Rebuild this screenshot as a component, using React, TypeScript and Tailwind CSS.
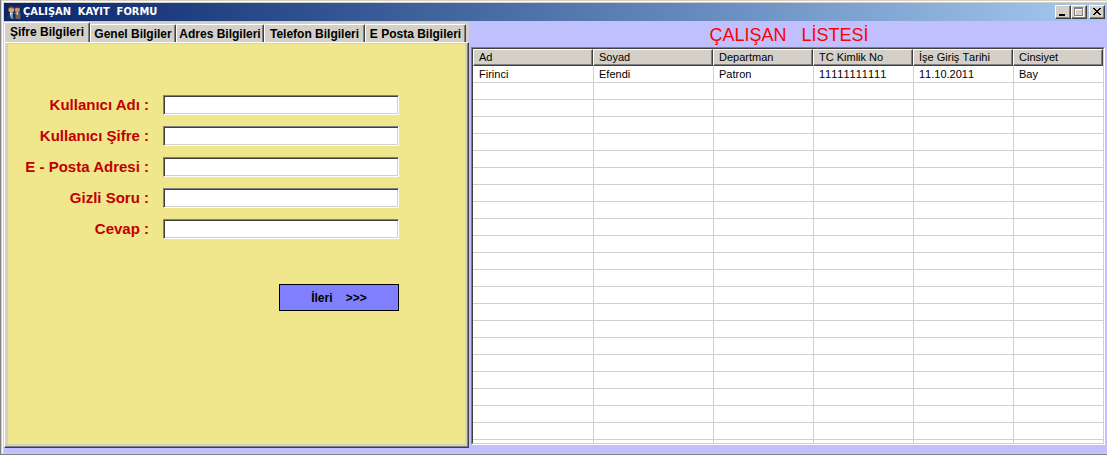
import { useState } from "react";

const tabs = ["Şifre Bilgileri", "Genel Bilgiler", "Adres Bilgileri", "Telefon Bilgileri", "E Posta Bilgileri"];
const tabWidths = ["w-[86px]", "w-[86px]", "w-[88px]", "w-[101px]", "w-[101px]"];

const fields = [
  { id: "user", label: "Kullanıcı Adı :", type: "text" },
  { id: "password", label: "Kullanıcı Şifre :", type: "password" },
  { id: "email", label: "E - Posta Adresi :", type: "text" },
  { id: "question", label: "Gizli Soru :", type: "text" },
  { id: "answer", label: "Cevap :", type: "text" },
];

const columns = ["Ad", "Soyad", "Departman", "TC Kimlik No", "İşe Giriş Tarihi", "Cinsiyet"];
const employees = [["Firinci", "Efendi", "Patron", "11111111111", "11.10.2011", "Bay"]];
const emptyRows = Array.from({ length: 21 }, (_, i) => i);

function AppIcon() {
  return (
    <svg viewBox="1 0 13 13" className="h-[14px] w-[14px]" aria-hidden="true">
      <path d="M7.5 7.5 9 6h3l1.5 2v5h-6z" fill="#6d6058" />
      <circle cx="10.6" cy="4.2" r="2.4" fill="#c98f6c" />
      <path d="M8 4.2c0-4 5.2-4 5.2 0l-1-1.4H9z" fill="#5a3422" />
      <path d="M9.5 7h2l-1 3z" fill="#e3ddd6" />
      <path d="M1 13V9l2-2h4l2 2v4z" fill="#26303c" />
      <path d="M3.6 7h3l-.6 5H4.6z" fill="#ffffff" />
      <path d="M5 8h1.3l.7 5H5z" fill="#3a8ad6" />
      <circle cx="5" cy="4.4" r="2.6" fill="#dda37c" />
      <path d="M2 4.5c0-4.8 6-4.8 6 0L7 3H3z" fill="#7a431f" />
    </svg>
  );
}

const captionButton =
  "flex h-[14px] w-4 items-center justify-center border border-t-white border-l-white border-r-[#404040] border-b-[#404040] bg-[#d4d0c8] shadow-[inset_-1px_-1px_#808080]";

function TitleBar() {
  return (
    <header className="flex h-[18px] items-center bg-linear-to-r from-[#0a246a] to-[#a6caf0] pr-[2px] pl-[3px]">
      <AppIcon />
      <h1 className="ml-[2px] flex-1 font-['DejaVu_Sans_Condensed',sans-serif] text-[11px] leading-[18px] font-bold whitespace-pre text-white">
        ÇALIŞAN  KAYIT  FORMU
      </h1>
      <button aria-label="Simge durumuna küçült" className={captionButton}>
        <svg viewBox="0 0 12 10" className="h-[10px] w-[12px]" shapeRendering="crispEdges"><path d="M2 7h6v2H2z" /></svg>
      </button>
      <button aria-label="Ekranı kapla" disabled className={captionButton}>
        <svg viewBox="0 0 12 10" className="h-[10px] w-[12px]" shapeRendering="crispEdges">
          <path d="M2 1h9v9H2zM3 3v6h7V3z" fill="#fff" fillRule="evenodd" />
          <path d="M1 0h9v9H1zM2 2v6h7V2z" fill="#808080" fillRule="evenodd" />
        </svg>
      </button>
      <button aria-label="Kapat" className={`ml-[2px] ${captionButton}`}>
        <svg viewBox="0 0 12 10" className="h-[10px] w-[12px]" shapeRendering="crispEdges">
          <path d="M2 1h2v1h1v1h2v-1h1v-1h2v1h-1v1h-1v1h-1v1h1v1h1v1h1v1h-2v-1h-1v-1h-2v1h-1v1h-2v-1h1v-1h1v-1h1v-1h-1v-1h-1v-1h-1z" />
        </svg>
      </button>
    </header>
  );
}

function LoginPanel() {
  const [active, setActive] = useState(0);
  return (
    <section className="flex w-[465px] shrink-0 flex-col bg-[#d4d0c8]">
      <div role="tablist" className="flex h-[20px] items-end">
        {tabs.map((tab, i) => (
          <button
            key={tab}
            role="tab"
            aria-selected={i === active}
            onClick={() => setActive(i)}
            className={`${tabWidths[i]} ${
              i === active ? "h-[20px] pb-[2px]" : "h-[18px]"
            } shrink-0 rounded-t-[2px] border-t border-r border-l border-t-white border-r-[#404040] border-l-white text-center text-[12px] leading-[16px] font-bold whitespace-nowrap shadow-[inset_-1px_0_#808080]`}
          >
            {tab}
          </button>
        ))}
      </div>
      <div
        role="tabpanel"
        className="flex flex-1 flex-col border border-t-white border-r-[#404040] border-b-[#404040] border-l-white bg-[#808080] pr-px pb-px"
      >
        <form
          onSubmit={(e) => e.preventDefault()}
          className="flex flex-1 flex-col border-t border-r-2 border-b-2 border-l-3 border-[#d4d0c8] bg-[#f0e68c] pt-[51px]"
        >
          <div className="flex flex-col gap-[11px]">
            {fields.map((f) => (
              <div key={f.id} className="flex h-5 items-center">
                <label htmlFor={f.id} className="w-[141px] shrink-0 text-right text-[15px] leading-5 font-bold text-[#c00000]">
                  {f.label}
                </label>
                <input
                  id={f.id}
                  type={f.type}
                  className="ml-[14px] h-5 w-[236px] border border-t-[#808080] border-r-white border-b-white border-l-[#808080] bg-white px-1 text-[12px] shadow-[inset_1px_1px_#404040,inset_-1px_-1px_#d4d0c8] outline-none"
                />
              </div>
            ))}
          </div>
          <button
            type="submit"
            className="mt-[45px] ml-[271px] h-[27px] w-[120px] border border-black bg-[#8080ff] text-center text-[12px] font-bold whitespace-pre"
          >
            {"İleri    >>>"}
          </button>
        </form>
      </div>
    </section>
  );
}

function EmployeeList() {
  const cell = "h-[17px] border-b border-l border-[#d4d0c8] px-[5px] py-0 leading-[16px] first:border-l-0 first:pl-[6px]";
  return (
    <section className="flex min-w-0 flex-1 flex-col pr-[2px] pb-2 pl-[2px]">
      <h2 className="h-[25px] pl-[2px] text-center text-[18px] leading-[26px] whitespace-pre text-[#ff0000]">ÇALIŞAN   LİSTESİ</h2>
      <div className="flex flex-1 flex-col border border-t-[#808080] border-r-white border-b-white border-l-[#808080]">
        <div className="flex-1 border border-t-[#404040] border-r-[#d4d0c8] border-b-[#d4d0c8] border-l-[#404040] bg-white">
          <table className="w-full table-fixed border-separate border-spacing-0 text-[11px] [font-kerning:none]">
            <colgroup>
              <col className="w-[120px]" />
              <col className="w-[120px]" />
              <col className="w-[100px]" />
              <col className="w-[100px]" />
              <col className="w-[100px]" />
              <col />
            </colgroup>
            <thead>
              <tr>
                {columns.map((c) => (
                  <th
                    key={c}
                    scope="col"
                    className="h-[17px] border border-t-white border-r-[#404040] border-b-[#404040] border-l-white bg-[#d4d0c8] px-[5px] py-0 text-left leading-[15px] font-normal whitespace-nowrap shadow-[inset_-1px_-1px_#808080]"
                  >
                    {c}
                  </th>
                ))}
              </tr>
            </thead>
            <tbody>
              {employees.map((row) => (
                <tr key={row[3]}>
                  {row.map((value, i) => (
                    <td key={columns[i]} className={cell}>{value}</td>
                  ))}
                </tr>
              ))}
              {emptyRows.map((r) => (
                <tr key={r}>
                  {columns.map((c) => (
                    <td key={c} className={cell} />
                  ))}
                </tr>
              ))}
              <tr>
                {columns.map((c) => (
                  <td key={c} className="h-[3px] border-l border-[#d4d0c8] p-0 first:border-l-0" />
                ))}
              </tr>
            </tbody>
          </table>
        </div>
      </div>
    </section>
  );
}

export default function App() {
  return (
    <div className="flex min-h-screen flex-col border-b border-l border-[#808080] bg-[#c0c0ff] font-['Liberation_Sans',Arial,sans-serif] text-black">
      <div className="flex flex-1 flex-col border-t border-b border-l border-[#d4d0c8]">
        <div className="flex flex-1 flex-col border-t border-l border-white">
          <div className="flex flex-1 flex-col border-t border-l border-[#d4d0c8]">
            <TitleBar />
            <main className="flex flex-1 pt-px">
              <div className="flex pb-[5px]">
                <LoginPanel />
              </div>
              <EmployeeList />
            </main>
          </div>
        </div>
      </div>
    </div>
  );
}
